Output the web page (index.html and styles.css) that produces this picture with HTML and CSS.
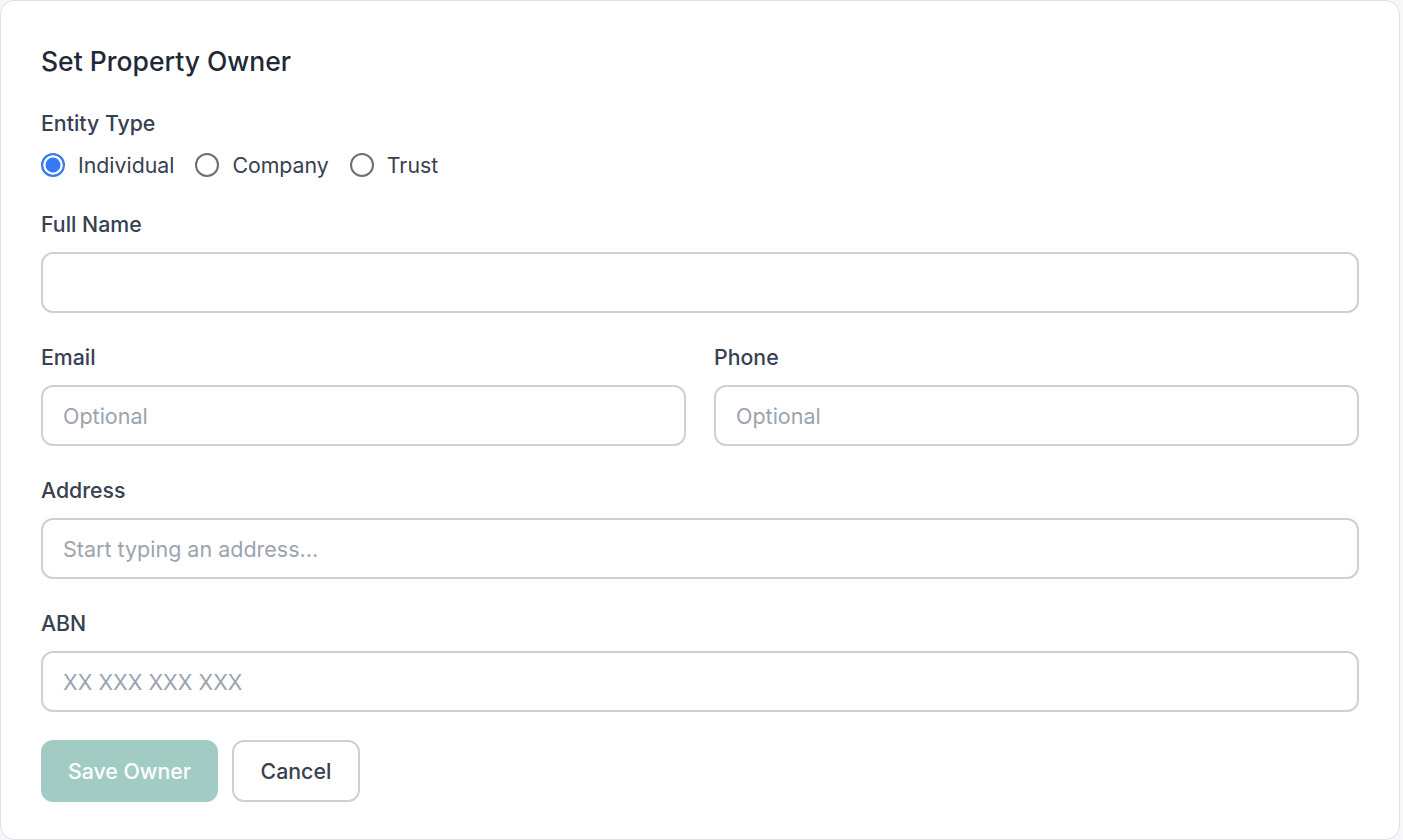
FILE: index.html
```html
<!DOCTYPE html>
<html lang="en">
<head>
<meta charset="utf-8">
<title>Set Property Owner</title>
<link rel="stylesheet" href="styles.css">
</head>
<body>
<form class="card">
  <h2 class="title">Set Property Owner</h2>

  <div class="field field-first">
    <div class="label">Entity Type</div>
    <div class="radios">
      <label class="radio"><span class="dot checked"></span><span>Individual</span></label>
      <label class="radio"><span class="dot"></span><span>Company</span></label>
      <label class="radio"><span class="dot"></span><span>Trust</span></label>
    </div>
  </div>

  <div class="field field-after-radios">
    <label class="label">Full Name</label>
    <input class="input" type="text">
  </div>

  <div class="row">
    <div class="field">
      <label class="label">Email</label>
      <input class="input" type="text" placeholder="Optional">
    </div>
    <div class="field">
      <label class="label">Phone</label>
      <input class="input" type="text" placeholder="Optional">
    </div>
  </div>

  <div class="field">
    <label class="label">Address</label>
    <input class="input" type="text" placeholder="Start typing an address...">
  </div>

  <div class="field">
    <label class="label">ABN</label>
    <input class="input" type="text" placeholder="XX XXX XXX XXX">
  </div>

  <div class="actions">
    <button type="button" class="btn btn-primary">Save Owner</button>
    <button type="button" class="btn btn-secondary">Cancel</button>
  </div>
</form>
</body>
</html>
```

FILE: styles.css
```css
* { box-sizing: border-box; }

html, body {
  margin: 0;
  padding: 0;
}

body {
  background: #f7f8fa;
  font-family: Inter, "Noto Sans", "Liberation Sans", sans-serif;
  color: #374151;
  width: 1403px;
  height: 840px;
  overflow: hidden;
}

.card {
  width: 1400px;
  height: 840px;
  background: #ffffff;
  border: 1.5px solid #dfe1e9;
  border-radius: 14px;
  padding: 40px 40px 0 40px;
  display: flex;
  flex-direction: column;
}

.title {
  margin: 0;
  font-size: 26.5px;
  line-height: 40px;
  font-weight: 500;
  color: #1f2937;
}

.field {
  display: flex;
  flex-direction: column;
  margin-top: 30px;
}

.field-first {
  margin-top: 28px;
}

.field-after-radios {
  margin-top: 31px;
}

.label {
  font-size: 21.3px;
  line-height: 28px;
  font-weight: 500;
  color: #374151;
  margin-bottom: 14px;
}

.radios {
  display: flex;
  align-items: center;
  gap: 21px;
  height: 28px;
}

.radio {
  display: flex;
  align-items: center;
  gap: 13px;
  font-size: 21.3px;
  line-height: 28px;
  color: #374151;
}

.dot {
  width: 24px;
  height: 24px;
  border-radius: 50%;
  border: 2px solid #6b6e75;
  background: #ffffff;
  flex: none;
}

.dot.checked {
  border-color: #3479f6;
  background: #3479f6;
  box-shadow: inset 0 0 0 2.5px #ffffff;
}

.row {
  display: flex;
  gap: 28px;
}

.row > .field {
  flex: 1 1 0;
}

.input {
  height: 61px;
  width: 100%;
  border: 2px solid #cdd0db;
  border-radius: 12px;
  padding: 0 20px;
  font-family: inherit;
  font-size: 21.5px;
  color: #111827;
  background: #ffffff;
  outline: none;
}

.input::placeholder {
  color: #9ca3af;
}

.actions {
  display: flex;
  gap: 14px;
  margin-top: 28px;
}

.btn {
  height: 62px;
  border-radius: 12px;
  font-family: inherit;
  font-size: 21.3px;
  font-weight: 500;
  padding: 0 25px;
}

.btn-primary {
  background: #a2cbc4;
  border: 2px solid #a2cbc4;
  color: #ffffff;
}

.btn-secondary {
  background: #ffffff;
  border: 2px solid #cdd0db;
  color: #374151;
  padding: 0 26.5px;
}
```
